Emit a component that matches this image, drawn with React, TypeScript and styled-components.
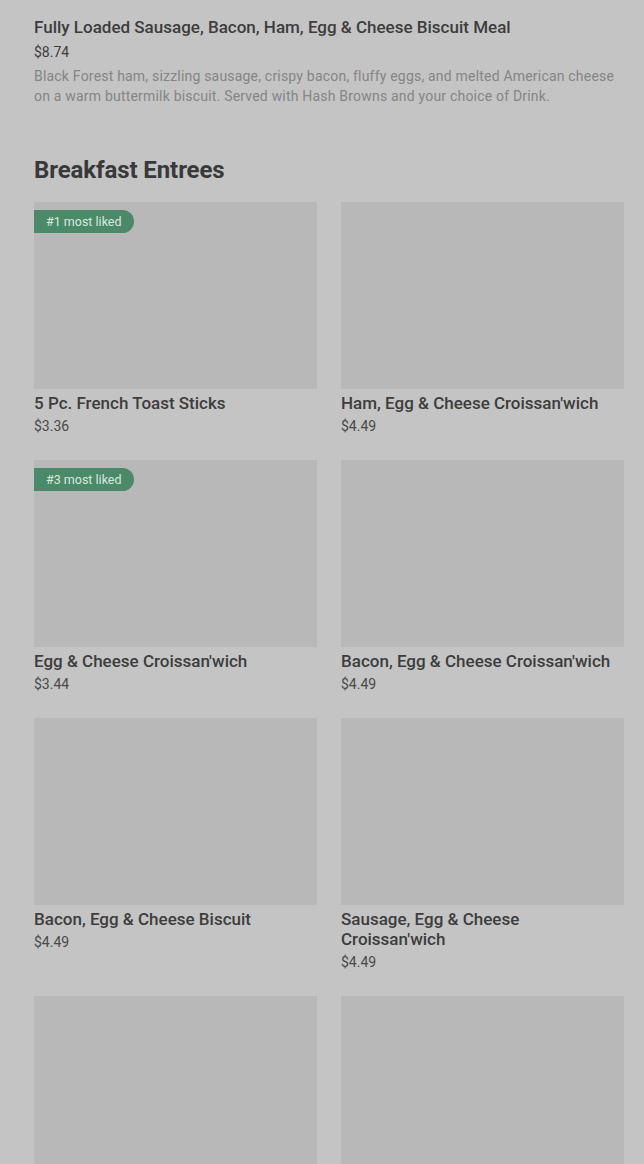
import React from "react";
import styled, { createGlobalStyle } from "styled-components";

const Global = createGlobalStyle`
  html, body { margin: 0; padding: 0; background: #c4c4c4; }
  body { font-family: Roboto, "Liberation Sans", Arial, sans-serif; }
`;

const Page = styled.div`
  padding: 16px 20px 0 34px;
  height: 1164px;
  overflow: hidden;
  box-sizing: border-box;
`;

const Featured = styled.section`
  display: flex;
  flex-direction: column;
`;

const FeaturedTitle = styled.div`
  font-size: 17px;
  line-height: 22px;
  font-weight: 500;
  color: #3d3d3d;
`;

const FeaturedPrice = styled.div`
  margin-top: 4px;
  font-size: 14px;
  line-height: 20px;
  color: #3d3d3d;
`;

const Description = styled.div`
  margin-top: 4px;
  font-size: 14px;
  line-height: 20px;
  letter-spacing: 0.2px;
  color: #858585;
`;

const Heading = styled.h2`
  margin: 48px 0 16px;
  font-size: 24px;
  line-height: 32px;
  font-weight: 700;
  color: #393939;
  letter-spacing: -0.1px;
`;

const Grid = styled.div`
  display: grid;
  grid-template-columns: 283px 283px;
  column-gap: 24px;
  row-gap: 24px;
`;

const Card = styled.div`
  display: flex;
  flex-direction: column;
`;

const Thumb = styled.div`
  position: relative;
  height: 187px;
  background: #b8b8b8;
`;

const Badge = styled.span`
  position: absolute;
  left: 0;
  top: 8px;
  height: 23px;
  padding: 0 12px;
  display: flex;
  align-items: center;
  background: #4b8a69;
  color: #d9e8de;
  font-size: 12.5px;
  border-radius: 0 12px 12px 0;
`;

const ItemTitle = styled.div`
  margin-top: 4px;
  font-size: 17px;
  line-height: 20px;
  font-weight: 500;
  color: #3d3d3d;
`;

const ItemPrice = styled.div`
  margin-top: 3px;
  font-size: 14px;
  line-height: 20px;
  color: #4a4a4a;
`;

type Item = { title: string; price?: string; badge?: string };

const items: Item[] = [
  { title: "5 Pc. French Toast Sticks", price: "$3.36", badge: "#1 most liked" },
  { title: "Ham, Egg & Cheese Croissan'wich", price: "$4.49" },
  { title: "Egg & Cheese Croissan'wich", price: "$3.44", badge: "#3 most liked" },
  { title: "Bacon, Egg & Cheese Croissan'wich", price: "$4.49" },
  { title: "Bacon, Egg & Cheese Biscuit", price: "$4.49" },
  { title: "Sausage, Egg & Cheese Croissan'wich", price: "$4.49" },
  { title: "" },
  { title: "" },
];

export default function App() {
  return (
    <>
      <Global />
      <Page>
        <Featured>
          <FeaturedTitle>Fully Loaded Sausage, Bacon, Ham, Egg &amp; Cheese Biscuit Meal</FeaturedTitle>
          <FeaturedPrice>$8.74</FeaturedPrice>
          <Description>
            Black Forest ham, sizzling sausage, crispy bacon, fluffy eggs, and melted American cheese on a warm
            buttermilk biscuit. Served with Hash Browns and your choice of Drink.
          </Description>
        </Featured>
        <Heading>Breakfast Entrees</Heading>
        <Grid>
          {items.map((it, i) => (
            <Card key={i}>
              <Thumb>{it.badge && <Badge>{it.badge}</Badge>}</Thumb>
              {it.title && <ItemTitle>{it.title}</ItemTitle>}
              {it.price && <ItemPrice>{it.price}</ItemPrice>}
            </Card>
          ))}
        </Grid>
      </Page>
    </>
  );
}
